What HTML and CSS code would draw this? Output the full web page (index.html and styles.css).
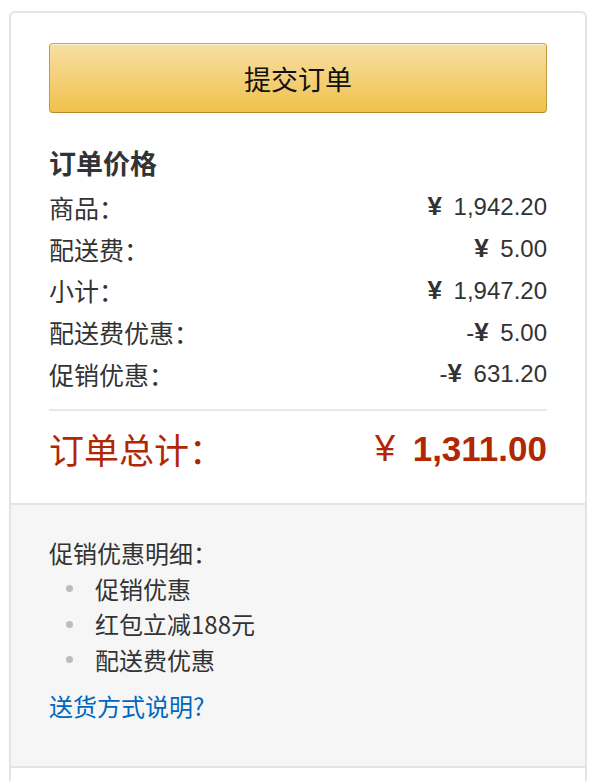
FILE: index.html
```html
<!DOCTYPE html>
<html lang="zh-CN">
<head>
<meta charset="utf-8">
<title>订单价格</title>
<link rel="stylesheet" href="styles.css">
</head>
<body>
<div class="card">
  <section class="summary">
    <button class="submit" type="button">提交订单</button>
    <h3 class="heading">订单价格</h3>
    <div class="row"><span class="label">商品：</span><span class="amount"><span class="yen">¥</span> 1,942.20</span></div>
    <div class="row"><span class="label">配送费：</span><span class="amount"><span class="yen">¥</span> 5.00</span></div>
    <div class="row"><span class="label">小计：</span><span class="amount"><span class="yen">¥</span> 1,947.20</span></div>
    <div class="row"><span class="label">配送费优惠：</span><span class="amount">-<span class="yen">¥</span> 5.00</span></div>
    <div class="row"><span class="label">促销优惠：</span><span class="amount">-<span class="yen">¥</span> 631.20</span></div>
    <hr class="divider">
    <div class="total"><span class="total-label">订单总计：</span><span class="total-amount"><span class="total-yen">¥</span> 1,311.00</span></div>
  </section>
  <section class="details">
    <div class="details-title">促销优惠明细：</div>
    <ul class="promo-list">
      <li>促销优惠</li>
      <li>红包立减188元</li>
      <li>配送费优惠</li>
    </ul>
    <a class="help-link" href="#">送货方式说明?</a>
  </section>
  <section class="footer-area"></section>
</div>
</body>
</html>
```

FILE: styles.css
```css
html, body {
  margin: 0;
  padding: 0;
  background: #ffffff;
}

body {
  padding: 11px 0 0 9px;
  font-family: "Liberation Sans", "Noto Sans CJK SC", sans-serif;
  color: #333333;
}

.card {
  width: 578px;
  box-sizing: border-box;
  border: 2px solid #e4e4e4;
  border-bottom: none;
  border-radius: 6px 6px 0 0;
  overflow: hidden;
}

.summary {
  padding: 30px 38px 29px 38px;
  display: flex;
  flex-direction: column;
}

.submit {
  display: block;
  width: 100%;
  height: 70px;
  margin: 0;
  border: 1px solid;
  border-color: #cfa548 #c39a3b #b38b2e;
  border-radius: 4px;
  background: linear-gradient(to bottom, #f7dfa5 0%, #f0c14b 100%);
  box-shadow: inset 0 1px 0 rgba(255, 255, 255, 0.5);
  font-family: "Noto Sans CJK SC", sans-serif;
  font-size: 27px;
  color: #111111;
  cursor: pointer;
}

.heading {
  margin: 30px 0 3px 0;
  font-family: "Noto Sans CJK SC", sans-serif;
  font-size: 27px;
  line-height: 40px;
  font-weight: 700;
  color: #333333;
}

.row {
  display: flex;
  justify-content: space-between;
  align-items: center;
  height: 41.75px;
  font-size: 25px;
}

.label {
  font-family: "Noto Sans CJK SC", sans-serif;
  color: #333333;
}

.amount {
  font-family: "Liberation Sans", sans-serif;
  font-size: 24px;
  color: #333333;
}

.yen {
  font-family: "Liberation Sans", sans-serif;
  font-weight: 700;
  font-size: 26px;
  margin-right: 5px;
}

.divider {
  margin: 14px 0 0 0;
  border: none;
  border-top: 2px solid #e7e7e7;
  height: 0;
}

.total {
  display: flex;
  justify-content: space-between;
  align-items: center;
  height: 50px;
  margin-top: 13px;
  color: #b12704;
}

.total-label {
  font-family: "Noto Sans CJK SC", sans-serif;
  font-size: 35px;
}

.total-amount {
  font-family: "Liberation Sans", sans-serif;
  font-size: 35px;
  font-weight: 700;
}

.total-yen {
  font-family: "Liberation Sans", sans-serif;
  font-weight: 400;
  font-size: 36px;
  margin-right: 8px;
}

.details {
  background: #f6f6f6;
  border-top: 2px solid #e3e3e3;
  border-bottom: 2px solid #e3e3e3;
  padding: 30px 38px 42px 38px;
  font-family: "Noto Sans CJK SC", sans-serif;
  font-size: 24px;
  color: #333333;
}

.details-title {
  line-height: 36px;
}

.promo-list {
  list-style: none;
  margin: 0;
  padding: 0;
}

.promo-list li {
  display: flex;
  align-items: center;
  line-height: 35.5px;
}

.promo-list li::before {
  content: "";
  width: 7px;
  height: 7px;
  border-radius: 50%;
  background: #bdbdbd;
  margin-left: 17px;
  margin-right: 22px;
  flex: none;
}

.help-link {
  display: block;
  margin-top: 11px;
  line-height: 36px;
  color: #0066c0;
  text-decoration: none;
}

.footer-area {
  height: 40px;
  background: #ffffff;
}
```
